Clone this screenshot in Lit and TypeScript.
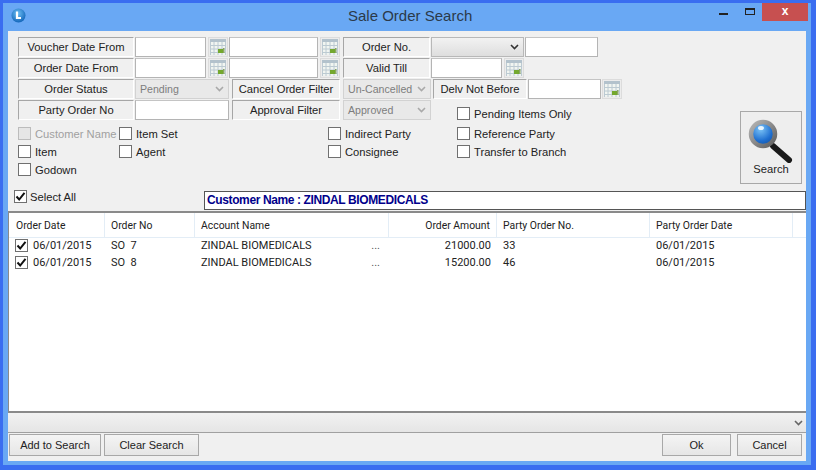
import { LitElement, html, css, svg } from "lit";
import { customElement } from "lit/decorators.js";

const calIcon = svg`<svg width="16" height="16" viewBox="0 0 16 16">
  <rect x="0.5" y="0.5" width="15" height="15" fill="#f1f5f1"/>
  <rect x="0" y="0" width="16" height="3" fill="#b3c2cc"/>
  <path d="M0.5 3V16M4 3V16M8 3V16M12 3V16M15.5 3V16M0 6.5H16M0 10H16M0 13.5H16" stroke="#bccad2" stroke-width="1" fill="none"/>
  <rect x="8" y="10" width="5" height="4" fill="#74a82e"/>
  <rect x="13" y="9" width="1.5" height="5" fill="#8aa565"/>
</svg>`;

const chevron = svg`<svg width="9" height="6" viewBox="0 0 9 6"><path d="M1 1L4.5 4.5L8 1" fill="none" stroke="currentColor" stroke-width="1.6"/></svg>`;

const checkMark = svg`<svg width="11" height="11" viewBox="0 0 11 11"><path d="M1.5 5.5L4.2 8.5L9.5 1.8" fill="none" stroke="#111" stroke-width="2"/></svg>`;

@customElement("app-root")
export class AppRoot extends LitElement {
  static styles = css`
    :host {
      display: block;
      width: 816px;
      height: 470px;
      font-family: "Liberation Sans", Arial, sans-serif;
      font-size: 11.2px;
      color: #222;
    }
    * { box-sizing: border-box; }
    .frame {
      width: 816px;
      height: 470px;
      background: #69a8f4;
      border: solid #3a6df0;
      border-width: 3px 5px 5px 3px;
      display: flex;
      flex-direction: column;
    }
    .titlebar {
      height: 28px;
      display: flex;
      align-items: flex-start;
      position: relative;
      padding-left: 8px;
      flex: none;
    }
    .logo { margin-top: 5px; }
    .title {
      position: absolute;
      left: 345px;
      top: 4px;
      font-size: 15px;
      line-height: 18px;
      color: #2b3a4a;
    }
    .winbtns {
      margin-left: auto;
      margin-right: 3px;
      display: flex;
      align-items: flex-start;
    }
    .min { width: 9px; height: 2px; background: #222; margin-top: 10px; margin-right: 17px; }
    .max { width: 10px; height: 7px; border: 1px solid #222; border-top-width: 2px; margin-top: 5px; margin-right: 7px; }
    .close {
      width: 46px;
      height: 18px;
      background: #c75050;
      color: #fff;
      font-size: 12px;
      font-weight: bold;
      line-height: 16px;
      text-align: center;
    }
    .client {
      margin: 0 5px 4px 5px;
      flex: 1;
      background: #f0f0f0;
      display: flex;
      flex-direction: column;
      min-height: 0;
    }
    .top {
      height: 160px;
      flex: none;
      display: flex;
      justify-content: space-between;
      padding: 6px 4px 0 10px;
    }
    .rows { display: flex; flex-direction: column; gap: 1px; }
    .row { display: flex; height: 20px; }
    .lbl {
      display: flex;
      align-items: center;
      justify-content: center;
      background: #f0f0f0;
      border: 1px solid;
      border-color: #a6a6a6 #fff #fff #a6a6a6;
      white-space: nowrap;
    }
    .inp {
      background: #fff;
      border: 1px solid #b4b4b4;
      border-top-color: #c4c4c4;
    }
    .sel {
      display: flex;
      align-items: center;
      justify-content: space-between;
      padding: 0 4px 0 4px;
      background: #e9e9e9;
      border: 1px solid #d2d2d2;
      color: #7d7d7d;
      font-size: 10.6px;
      white-space: nowrap;
    }
    .sel.on {
      background: linear-gradient(#f2f2f2, #dedede);
      border-color: #b8b8b8;
      color: #333;
    }
    .sel svg { color: #a9a9a9; }
    .sel.on svg { color: #333; }
    .cal {
      width: 20px;
      height: 20px;
      display: flex;
      align-items: center;
      justify-content: center;
      background: #ececec;
      border: 1px solid #dcdcdc;
    }
    .w116 { width: 116px; }
    .w71 { width: 71px; }
    .w73 { width: 73px; }
    .w89 { width: 89px; }
    .w87 { width: 87px; }
    .w93 { width: 93px; }
    .w94 { width: 94px; }
    .w108 { width: 108px; }
    .w88 { width: 88px; }
    .ml1 { margin-left: 1px; }
    .ml2 { margin-left: 2px; }
    .ml3 { margin-left: 3px; }
    .pending { margin: 7px 0 0 26px; }
    .checks { display: flex; margin-top: 7px; }
    .col { display: flex; flex-direction: column; gap: 5px; }
    .c1 { width: 101px; }
    .c2 { width: 209px; }
    .c3 { width: 129px; }
    .chk {
      display: flex;
      align-items: center;
      gap: 4px;
      height: 13px;
      white-space: nowrap;
    }
    .box {
      width: 13px;
      height: 13px;
      flex: none;
      background: #fff;
      border: 1px solid #707070;
      display: flex;
      align-items: center;
      justify-content: center;
    }
    .chk.off { color: #a0a0a0; }
    .chk.off .box { background: #e6e6e6; border-color: #bcbcbc; }
    .search {
      width: 62px;
      height: 73px;
      margin-top: 74px;
      background: #eeeeee;
      border: 1px solid #a8a8a8;
      display: flex;
      flex-direction: column;
      align-items: center;
      padding-top: 1px;
    }
    .selbar {
      height: 20px;
      flex: none;
      display: flex;
      align-items: flex-start;
      padding-left: 6px;
    }
    .selbar .chk { width: 190px; gap: 3px; margin-top: -1px; }
    .crit {
      flex: 1;
      height: 19px;
      background: #fff;
      border: 1px solid #555;
      color: #00008b;
      font-size: 12px;
      font-weight: bold;
      letter-spacing: -0.38px;
      line-height: 17px;
      padding-left: 2px;
    }
    .grid {
      height: 202px;
      flex: none;
      background: #fff;
      border: solid #8a8a8a;
      border-width: 2px 0 2px 1px;
      font-family: Roboto, "Liberation Sans", sans-serif;
      font-size: 11px;
    }
    .gh, .gr {
      display: grid;
      grid-template-columns: 96px 90px 194px 108px 153px 143px 1fr;
    }
    .gh {
      height: 25px;
      border-bottom: 1px solid #e3edf6;
      align-items: center;
      margin-bottom: -1px;
      font-size: 10.4px;
    }
    .gh > div {
      height: 100%;
      display: flex;
      align-items: center;
      padding-left: 6px;
      border-right: 1px solid #e3edf6;
    }
    .gh > div:first-child { padding-left: 7px; }
    .gh > div.r, .gr > div.r { justify-content: flex-end; padding-right: 6px; padding-left: 0; }
    .gh > div:last-child { border-right: 0; }
    .gr { height: 17px; align-items: center; }
    .gr > div { display: flex; align-items: center; padding-left: 6px; white-space: nowrap; }
    .gr > div.first { padding-left: 6px; gap: 5px; }
    .acct { justify-content: space-between; padding-right: 9px; }
    .dots { color: #555; }
    .strip {
      height: 20px;
      flex: none;
      background: linear-gradient(#f2f2f2, #e5e5e5);
      border-bottom: 1px solid #a0a0a0;
      display: flex;
      align-items: center;
      justify-content: flex-end;
      padding-right: 3px;
      color: #666;
    }
    .actions {
      display: flex;
      padding: 1px 4px 0 1px;
      gap: 3px;
      font-size: 11px;
    }
    .btn {
      height: 22px;
      background: linear-gradient(#f4f4f4, #e6e6e6);
      border: 1px solid #a8a8a8;
      display: flex;
      align-items: center;
      justify-content: center;
    }
    .b92 { width: 92px; }
    .b95 { width: 95px; }
    .b69 { width: 69px; margin-left: auto; }
    .b65 { width: 65px; margin-left: 3px; }
  `;

  private cb(text: string, checked = false, off = false) {
    return html`<label class="chk ${off ? "off" : ""}"
      ><span class="box">${checked ? checkMark : ""}</span>${text}</label
    >`;
  }

  private row(no: string, amount: string, party: string) {
    return html`<div class="gr">
      <div class="first"><span class="box">${checkMark}</span><span>06/01/2015</span></div>
      <div>SO&nbsp; ${no}</div>
      <div class="acct">ZINDAL BIOMEDICALS<span class="dots">...</span></div>
      <div class="r">${amount}</div>
      <div>${party}</div>
      <div>06/01/2015</div>
      <div></div>
    </div>`;
  }

  render() {
    return html`<div class="frame">
      <div class="titlebar">
        <svg class="logo" width="15" height="15" viewBox="0 0 15 15">
          <defs>
            <radialGradient id="lg" cx="0.45" cy="0.35" r="0.7">
              <stop offset="0" stop-color="#6fc0f5" />
              <stop offset="1" stop-color="#0c5fb5" />
            </radialGradient>
          </defs>
          <circle cx="7.5" cy="7.5" r="7" fill="url(#lg)" />
          <path d="M6 3.5V10H10" fill="none" stroke="#fff" stroke-width="2.2" />
        </svg>
        <div class="title">Sale Order Search</div>
        <div class="winbtns">
          <div class="min"></div>
          <div class="max"></div>
          <div class="close">x</div>
        </div>
      </div>
      <div class="client">
        <div class="top">
          <div>
            <div class="rows">
              <div class="row">
                <div class="lbl w116">Voucher Date From</div>
                <div class="inp w71 ml1"></div>
                <div class="cal ml2">${calIcon}</div>
                <div class="inp w89 ml1"></div>
                <div class="cal ml2">${calIcon}</div>
                <div class="lbl w87 ml3">Order No.</div>
                <div class="sel on w93 ml1"><span></span>${chevron}</div>
                <div class="inp w73 ml1"></div>
              </div>
              <div class="row">
                <div class="lbl w116">Order Date From</div>
                <div class="inp w71 ml1"></div>
                <div class="cal ml2">${calIcon}</div>
                <div class="inp w89 ml1"></div>
                <div class="cal ml2">${calIcon}</div>
                <div class="lbl w87 ml3">Valid Till</div>
                <div class="inp w71 ml1"></div>
                <div class="cal ml2">${calIcon}</div>
              </div>
              <div class="row">
                <div class="lbl w116">Order Status</div>
                <div class="sel w94 ml1">Pending${chevron}</div>
                <div class="lbl w108 ml3">Cancel Order Filter</div>
                <div class="sel w88 ml3">Un-Cancelled${chevron}</div>
                <div class="lbl w94 ml2">Delv Not Before</div>
                <div class="inp w73 ml1"></div>
                <div class="cal ml1">${calIcon}</div>
              </div>
              <div class="row">
                <div class="lbl w116">Party Order No</div>
                <div class="inp w94 ml1"></div>
                <div class="lbl w108 ml3">Approval Filter</div>
                <div class="sel w88 ml3">Approved${chevron}</div>
                <div class="pending">${this.cb("Pending Items Only")}</div>
              </div>
            </div>
            <div class="checks">
              <div class="col c1">
                ${this.cb("Customer Name", false, true)} ${this.cb("Item")} ${this.cb("Godown")}
              </div>
              <div class="col c2">${this.cb("Item Set")} ${this.cb("Agent")}</div>
              <div class="col c3">${this.cb("Indirect Party")} ${this.cb("Consignee")}</div>
              <div class="col">${this.cb("Reference Party")} ${this.cb("Transfer to Branch")}</div>
            </div>
          </div>
          <div class="search">
            <svg width="50" height="50" viewBox="0 0 50 50">
              <defs>
                <radialGradient id="lens" cx="0.4" cy="0.3" r="0.8">
                  <stop offset="0" stop-color="#7cc4f7" />
                  <stop offset="0.6" stop-color="#1f6fd0" />
                  <stop offset="1" stop-color="#0d4c9c" />
                </radialGradient>
                <linearGradient id="ring" x1="0" y1="0" x2="1" y2="1">
                  <stop offset="0" stop-color="#b5b5b5" />
                  <stop offset="1" stop-color="#5f5f5f" />
                </linearGradient>
              </defs>
              <path d="M27 33L43 47" stroke="#1a1a1a" stroke-width="6" stroke-linecap="round" />
              <circle cx="17" cy="21" r="12" fill="url(#lens)" stroke="url(#ring)" stroke-width="4.5" />
              <ellipse cx="15" cy="15" rx="3" ry="2" fill="#e8f5ff" />
            </svg>
            <span>Search</span>
          </div>
        </div>
        <div class="selbar">
          ${this.cb("Select All", true)}
          <div class="crit">Customer Name : ZINDAL BIOMEDICALS</div>
        </div>
        <div class="grid">
          <div class="gh">
            <div>Order Date</div>
            <div>Order No</div>
            <div>Account Name</div>
            <div class="r">Order Amount</div>
            <div>Party Order No.</div>
            <div>Party Order Date</div>
            <div></div>
          </div>
          ${this.row("7", "21000.00", "33")} ${this.row("8", "15200.00", "46")}
        </div>
        <div class="strip">${chevron}</div>
        <div class="actions">
          <div class="btn b92">Add to Search</div>
          <div class="btn b95">Clear Search</div>
          <div class="btn b69">Ok</div>
          <div class="btn b65">Cancel</div>
        </div>
      </div>
    </div>`;
  }
}
